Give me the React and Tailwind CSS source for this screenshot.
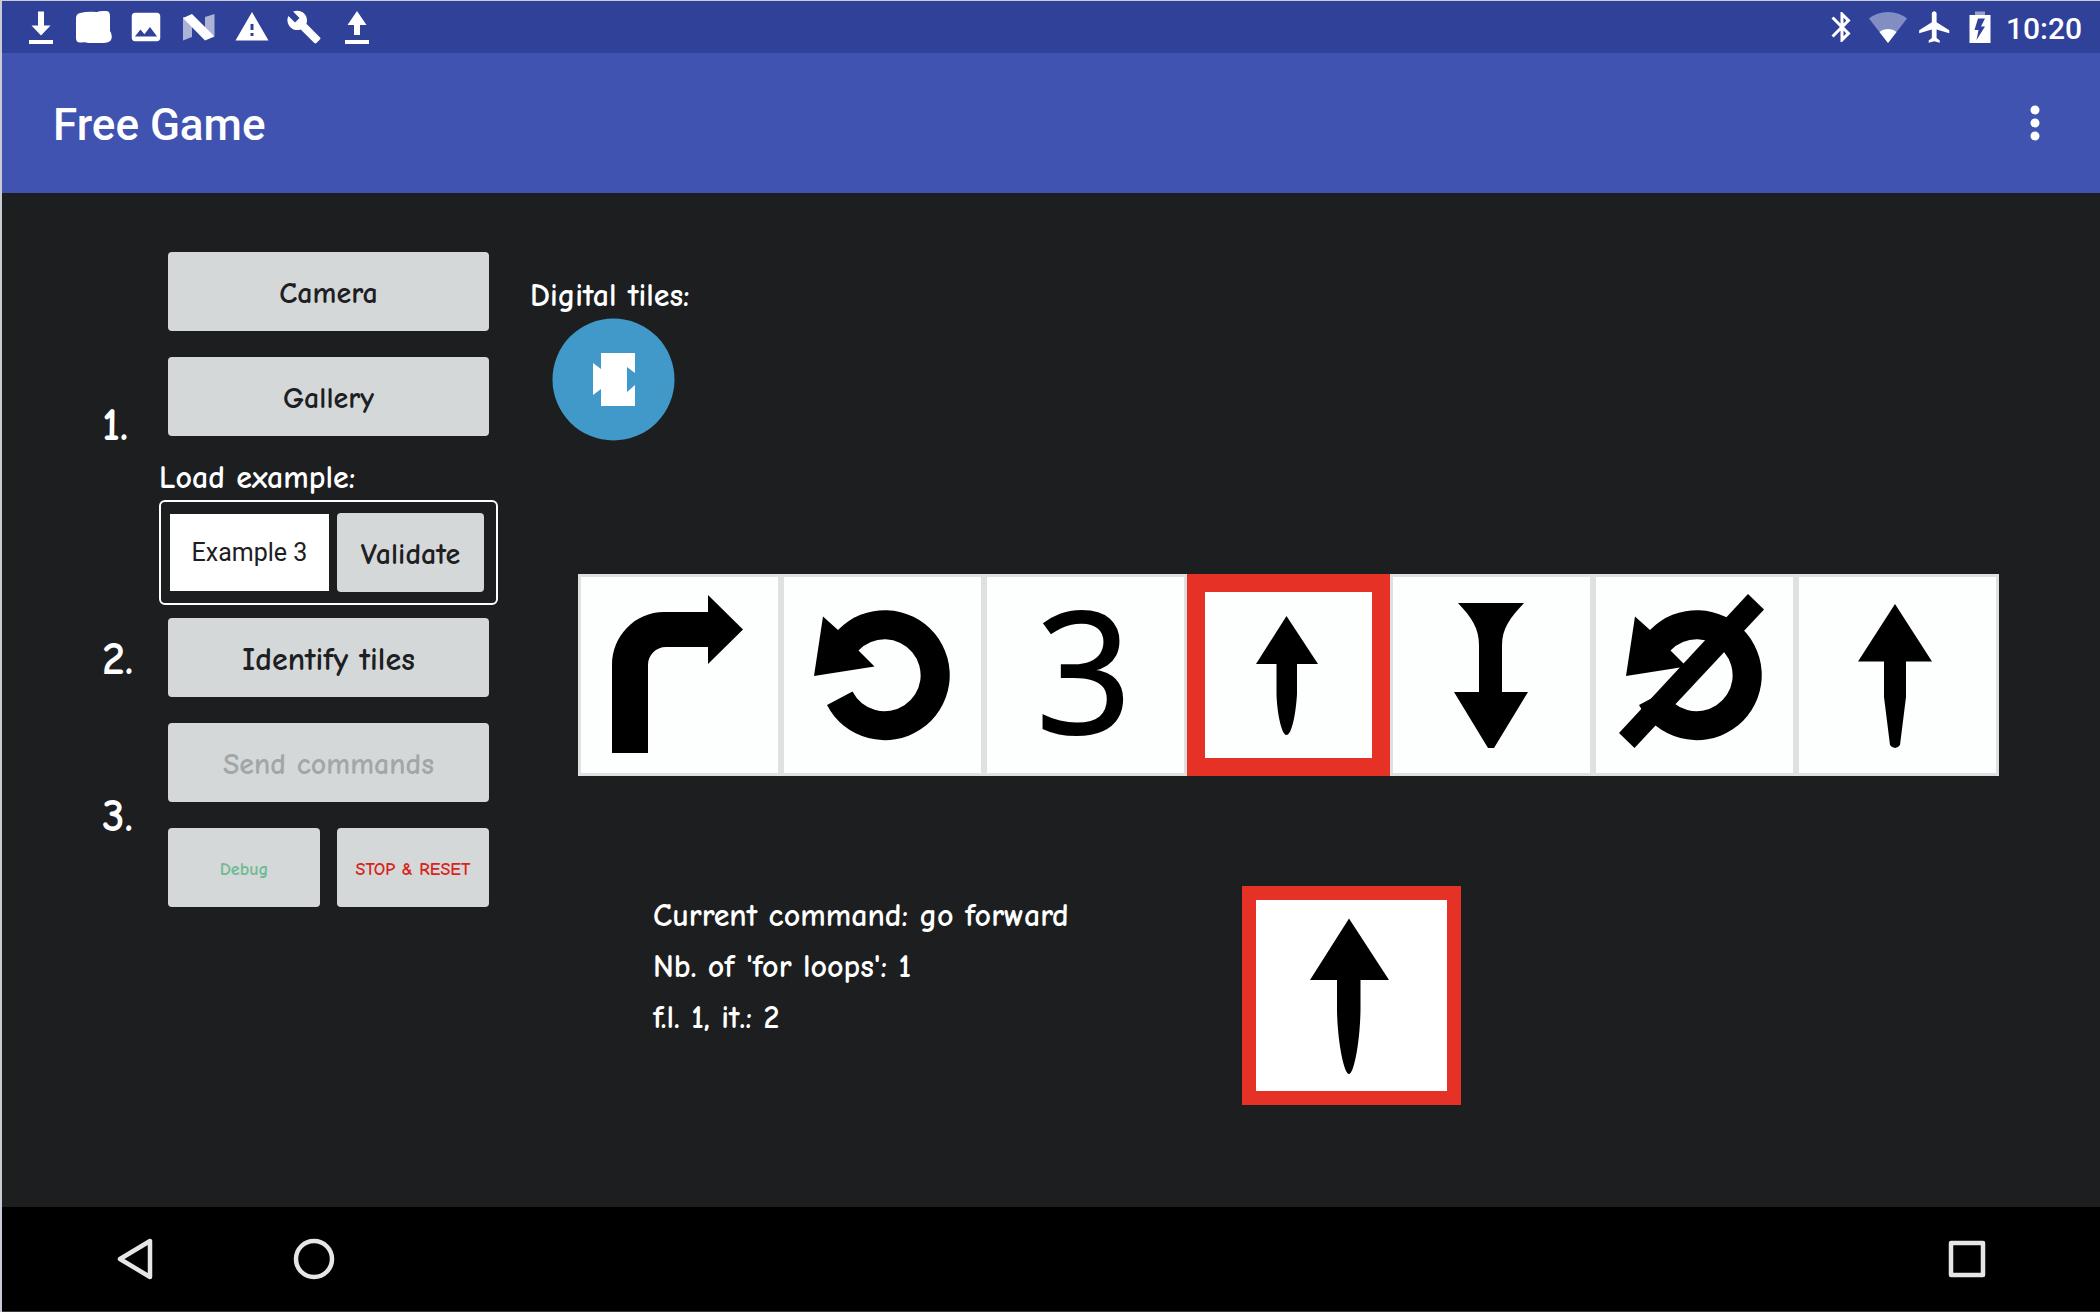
import React from "react";
import { MdImage, MdWarning, MdBuild, MdBluetooth, MdFlight } from "react-icons/md";

const HAND = "font-['Comic_Neue','Noto_Sans',sans-serif] font-bold";

function TransferIcon({ up }) {
  return (
    <svg viewBox="0 0 36 36" className="size-9" fill="currentColor" aria-hidden="true">
      {up ? (
        <path d="M15 26V16H8.500L18 2L27.500 16H21V26Z" />
      ) : (
        <path d="M15 2.500H21V16.500H27.500L18 26.500L8.500 16.500H15Z" />
      )}
      <rect x="6" y="31" width="24" height="4" />
    </svg>
  );
}

function BlobIcon() {
  return (
    <svg viewBox="0 0 36 36" className="size-9" fill="currentColor" aria-hidden="true">
      <path d="M4 4Q12 2 21 3Q24 1.500 30 2Q34 2 34 7V22Q37 26 35 31Q33 34 27 34H12Q10 33 5 33.500Q0 34 0 29V9Q0 5 4 4Z" />
    </svg>
  );
}

function NougatIcon() {
  return (
    <svg viewBox="0 0 36 36" className="size-9" fill="currentColor" aria-hidden="true">
      <path opacity=".6" d="M2 8L11 12V28L2 31.500ZM24 8L33.500 5V27L24 22Z" />
      <path d="M2 9L11 5L33.500 27.500L24 31.500Z" />
    </svg>
  );
}

function WifiIcon() {
  return (
    <svg viewBox="0 0 40 36" className="h-9 w-10" fill="currentColor" aria-hidden="true">
      <path opacity=".4" d="M20 34L1 9.500Q9 3 20 3T39 9.500Z" />
      <path d="M20 34L11.500 23Q15 20 20 20T28.500 23Z" />
    </svg>
  );
}

function BatteryIcon() {
  return (
    <svg viewBox="0 0 36 36" className="size-9" fill="currentColor" aria-hidden="true">
      <rect opacity=".5" x="13" y="2.500" width="10" height="4" />
      <path fillRule="evenodd" d="M7.500 6H28.500V34H7.500ZM16 9.500L12.500 21H16.500L14.500 31L23 17.500H19L23 9.500Z" />
    </svg>
  );
}

function Tile({ name, children }) {
  return (
    <svg viewBox="0 0 203 202" role="img" aria-label={name} className="block h-auto w-full overflow-visible bg-[#fdfefe]">
      <rect x="1.500" y="1.500" width="200" height="199" fill="none" stroke="#dfe1e1" strokeWidth="3" />
      {children}
    </svg>
  );
}

function Loop() {
  return (
    <path d="M57 56A65 65 0 1 1 46 131L71.500 117.500A36 36 0 1 0 77.500 76.500L93.500 92.500L33 102L42 42.500Z" />
  );
}

function ProgramStrip() {
  return (
    <div className="mr-[101px] ml-12 grid grid-cols-7">
      <Tile name="turn right">
        <path d="M34 179V91C34 62 57 38 86 38H130V21L165 55.500L130 90V73H88C78 73 70 81 70 91V179Z" />
      </Tile>
      <Tile name="start loop">
        <Loop />
      </Tile>
      <Tile name="three times">
        <text
          x="100"
          y="159"
          textAnchor="middle"
          stroke="#000"
          strokeWidth="2"
          className="font-['Open_Sans',sans-serif] text-[168px] font-medium"
        >
          3
        </text>
      </Tile>
      <Tile name="go forward, current">
        <rect x="9" y="9" width="185" height="184" fill="none" stroke="#e63226" strokeWidth="18" />
        <path d="M99.500 42L131 90H110V120C109 138 105 161 99.500 161C94.500 161 90 138 89.500 120V90H69Z" />
      </Tile>
      <Tile name="go backward">
        <path d="M68 29H134C120 44 112 54 112 72V118H138L104 174H98L64 118H89V72C89 54 82 44 68 29Z" />
      </Tile>
      <Tile name="end loop">
        <Loop />
        <path d="M155 20L171 35.500L41.500 174L26 159Z" />
      </Tile>
      <Tile name="go forward">
        <path d="M99 30L136 87.500H110V123L104 171Q102 174 99 174T94 171L88 123V87.500H62Z" />
      </Tile>
    </div>
  );
}

function GameButton({ className = "", ...props }) {
  return (
    <button
      type="button"
      className={
        "h-[79px] rounded bg-[#d5d8d9] pt-1 text-[#1d2022] disabled:text-[#a3a6a7] " + className
      }
      {...props}
    />
  );
}

function Step({ number, children }) {
  return (
    <section className="flex items-center">
      <div className="w-[57px] shrink-0 pt-1 text-[46px] leading-none text-white">{number}.</div>
      <div className="min-w-0 flex-1">{children}</div>
    </section>
  );
}

export default function App() {
  return (
    <div className="flex min-h-screen flex-col border-t border-l-2 border-[#c9ccd4] bg-[#1d1e20] font-[Roboto,sans-serif]">
      <div className="flex h-[52px] items-center justify-between bg-[#304199] pr-[18px] pl-[13px] text-white">
        <div className="grid w-[368px] grid-cols-7 place-items-center">
          <TransferIcon />
          <BlobIcon />
          <MdImage className="size-[38px]" />
          <NougatIcon />
          <MdWarning className="size-9" />
          <MdBuild className="size-9" />
          <TransferIcon up />
        </div>
        <div className="flex items-center gap-2">
          <MdBluetooth className="size-9" />
          <WifiIcon />
          <MdFlight className="size-[38px]" />
          <BatteryIcon />
          <time className="pt-1 text-[30px] leading-none font-medium">10:20</time>
        </div>
      </div>

      <header className="flex h-[140px] items-center justify-between bg-[#4053b0] pr-[45px] pl-[51px] text-white">
        <h1 className="pt-1 text-[44px] leading-none font-medium">Free Game</h1>
        <button type="button" aria-label="More options" className="flex w-10 justify-center">
          <svg viewBox="0 0 10 40" className="h-10 w-[10px]" fill="currentColor" aria-hidden="true">
            <circle cx="5" cy="7" r="4.500" />
            <circle cx="5" cy="20" r="4.500" />
            <circle cx="5" cy="33" r="4.500" />
          </svg>
        </button>
      </header>

      <main className={"flex flex-1 items-start gap-8 pt-[49px] pl-[100px] " + HAND}>
        <div className="flex w-[396px] shrink-0 flex-col text-[30px]">
          <Step number="1">
            <div className="flex flex-col gap-[26px] px-[9px] pt-[10px]">
              <GameButton>Camera</GameButton>
              <GameButton>Gallery</GameButton>
            </div>
            <label htmlFor="example" className="mt-[22px] mb-[2px] block text-[32px] leading-10 text-white">
              Load example:
            </label>
            <div className="flex items-center gap-2 rounded-md border-2 border-white py-[11px] pr-3 pl-[9px]">
              <select
                id="example"
                defaultValue="3"
                className="h-[77px] min-w-0 flex-1 appearance-none bg-white text-center font-[Roboto,sans-serif] text-[25px] font-normal text-[#1d2022]"
              >
                <option value="1">Example 1</option>
                <option value="2">Example 2</option>
                <option value="3">Example 3</option>
              </select>
              <GameButton className="w-[147px]">Validate</GameButton>
            </div>
          </Step>
          <div className="mt-[13px]">
            <Step number="2">
              <GameButton className="mx-[9px] w-[321px] text-[32px]">Identify tiles</GameButton>
            </Step>
          </div>
          <div className="mt-[26px]">
            <Step number="3">
              <div className="flex flex-col gap-[26px] px-[9px]">
                <GameButton disabled>Send commands</GameButton>
                <div className="grid grid-cols-2 gap-[17px] text-lg leading-6">
                  <GameButton>
                    <span className="text-[#6fbb93]">Debug</span>
                  </GameButton>
                  <GameButton>
                    <span className="text-[#d5261e]">STOP &amp; RESET</span>
                  </GameButton>
                </div>
              </div>
            </Step>
          </div>
        </div>

        <div className="min-w-0 flex-1 pt-8 text-[32px] text-white">
          <h2 className="leading-[44px]">Digital tiles:</h2>
          <button type="button" aria-label="Open digital tiles" className="ml-[22px] block">
            <svg viewBox="0 0 123 123" className="block size-[123px]" aria-hidden="true">
              <circle cx="61.500" cy="61.500" r="61" fill="#4199c9" />
              <path
                fill="#fff"
                d="M49 35H83V55L75 49V74L83 67V88H49V71L41 77V45L49 51Z"
              />
            </svg>
          </button>
          <div className="mt-[133px]">
            <ProgramStrip />
          </div>
          <div className="mt-[110px] ml-[123px] flex">
            <div className="w-[589px] pt-1 leading-[51px]">
              <p>Current command: go forward</p>
              <p>Nb. of 'for loops': 1</p>
              <p>f.l. 1, it.: 2</p>
            </div>
            <svg viewBox="0 0 219 219" role="img" aria-label="go forward" className="size-[219px] bg-white">
              <rect x="7" y="7" width="205" height="205" fill="none" stroke="#e63226" strokeWidth="14" />
              <path fill="#000" d="M107 32.500L147 94H118.500V124C118 156 112 188 107 188C102 188 95.500 156 95 124V94H68Z" />
            </svg>
          </div>
        </div>
      </main>

      <nav
        aria-label="System"
        className="flex h-[105px] items-center border-b border-[#3a3a3a] bg-black pr-[111px] pl-[110px] text-[#e6e6e6]"
      >
        <button type="button" aria-label="Back">
          <svg viewBox="0 0 44 44" className="size-11" fill="none" stroke="currentColor" strokeWidth="4.500" strokeLinejoin="round" aria-hidden="true">
            <path d="M38 4V40L8 22Z" />
          </svg>
        </button>
        <button type="button" aria-label="Home" className="ml-[136px]">
          <svg viewBox="0 0 44 44" className="size-11" fill="none" stroke="currentColor" strokeWidth="4.500" aria-hidden="true">
            <circle cx="22" cy="22" r="18" />
          </svg>
        </button>
        <button type="button" aria-label="Recent apps" className="ml-auto">
          <svg viewBox="0 0 44 44" className="size-11" fill="none" stroke="currentColor" strokeWidth="4.500" strokeLinejoin="round" aria-hidden="true">
            <rect x="6" y="6" width="32" height="32" />
          </svg>
        </button>
      </nav>
    </div>
  );
}
